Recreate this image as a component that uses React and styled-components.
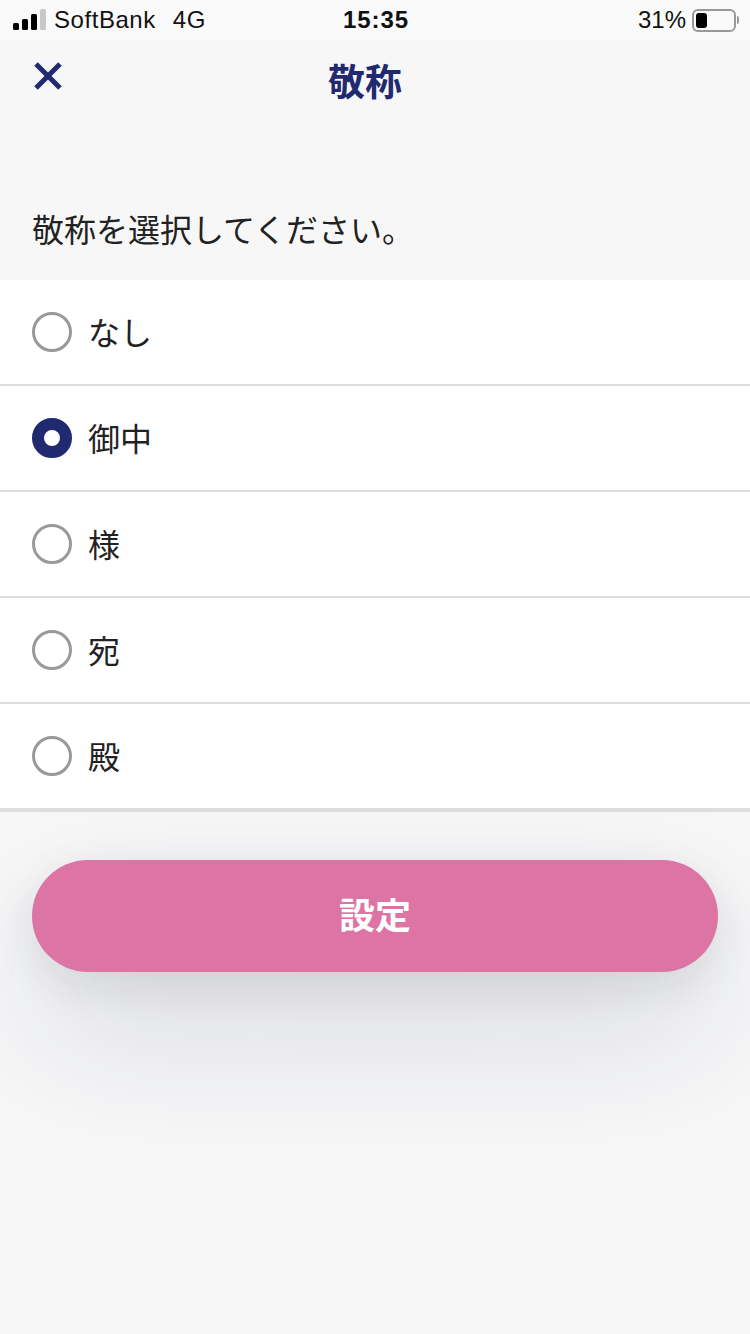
import React, { useState } from "react";
import styled, { createGlobalStyle } from "styled-components";

const options = ["なし", "御中", "様", "宛", "殿"];

const App = () => {
  const [selected] = useState("御中");

  return (
    <Page>
      <GlobalStyle />
      <StatusBar>
        <StatusLeft>
          <Signal>
            <SignalBar $h={7} />
            <SignalBar $h={11} />
            <SignalBar $h={16} />
            <SignalBar $h={21} $off />
          </Signal>
          <Carrier>SoftBank</Carrier>
          <Carrier>4G</Carrier>
        </StatusLeft>
        <Time>15:35</Time>
        <StatusRight>
          <span>31%</span>
          <Battery>
            <BatteryLevel />
          </Battery>
          <BatteryCap />
        </StatusRight>
      </StatusBar>

      <Header>
        <CloseButton aria-label="close">
          <svg width="30" height="30" viewBox="0 0 30 30">
            <path d="M3 3 L27 27 M27 3 L3 27" stroke="#212a6e" strokeWidth="5" fill="none" />
          </svg>
        </CloseButton>
        <Title>敬称</Title>
      </Header>

      <Prompt>敬称を選択してください。</Prompt>

      <List>
        {options.map((o) => (
          <Row key={o}>
            <Radio $on={o === selected} />
            <Label>{o}</Label>
          </Row>
        ))}
      </List>

      <Footer>
        <SubmitButton>
          <span>設定</span>
        </SubmitButton>
      </Footer>
    </Page>
  );
};

export default App;

const GlobalStyle = createGlobalStyle`
  html, body {
    margin: 0;
    padding: 0;
    background: #f7f7f8;
  }
  * {
    box-sizing: border-box;
  }
`;

const Page = styled.div`
  width: 750px;
  height: 1334px;
  overflow: hidden;
  background: #f7f7f8;
  color: #222;
  font-family: "Noto Sans CJK JP", "Liberation Sans", sans-serif;
`;

const StatusBar = styled.div`
  height: 40px;
  display: grid;
  grid-template-columns: 1fr auto 1fr;
  align-items: center;
  padding: 0 11px 0 13px;
  background: #fafafa;
  font-family: "Liberation Sans", sans-serif;
  font-size: 24px;
  color: #111;
`;

const StatusLeft = styled.div`
  display: flex;
  align-items: center;
`;

const Signal = styled.div`
  display: flex;
  align-items: flex-end;
  gap: 3px;
  height: 21px;
  margin: 0 8px 1px 0;
`;

const SignalBar = styled.div`
  width: 6px;
  height: ${(p) => p.$h}px;
  border-radius: 1.5px;
  background: ${(p) => (p.$off ? "#c8c8c8" : "#000")};
`;

const Carrier = styled.span`
  margin-right: 17px;
  letter-spacing: 0.55px;
`;

const Time = styled.div`
  font-weight: 700;
  letter-spacing: 0.9px;
`;

const StatusRight = styled.div`
  display: flex;
  align-items: center;
  justify-content: flex-end;
`;

const Battery = styled.div`
  width: 44px;
  height: 23px;
  margin-left: 6px;
  padding: 2px;
  border: 2px solid #999;
  border-radius: 6px;
`;

const BatteryLevel = styled.div`
  width: 11px;
  height: 100%;
  border-radius: 3px;
  background: #000;
`;

const BatteryCap = styled.div`
  width: 2px;
  height: 8px;
  margin-left: 1px;
  border-radius: 0 2px 2px 0;
  background: #9a9a9a;
`;

const Header = styled.div`
  height: 84px;
  display: flex;
  align-items: flex-start;
  padding: 0 83px 0 33px;
`;

const CloseButton = styled.div`
  width: 30px;
  height: 30px;
  margin-top: 21px;
  flex-shrink: 0;

  svg {
    display: block;
  }
`;

const Title = styled.h1`
  flex: 1;
  margin: 16px 0 0;
  text-align: center;
  font-size: 37px;
  line-height: 48px;
  font-weight: 700;
  color: #212a6e;
`;

const Prompt = styled.p`
  height: 156px;
  margin: 0;
  padding: 82px 0 0 32px;
  font-size: 32px;
  line-height: 44px;
  font-weight: 400;
`;

const List = styled.div`
  position: relative;
  z-index: 1;
  background: #fff;
  border-bottom: 2px solid #dcdddc;
`;

const Row = styled.div`
  height: 106px;
  display: flex;
  align-items: center;
  gap: 16px;
  padding: 0 32px;
  border-bottom: 2px solid #dcdddc;
`;

const Radio = styled.div`
  width: 40px;
  height: 40px;
  border-radius: 50%;
  flex-shrink: 0;
  border: ${(p) => (p.$on ? "12px solid #212a6e" : "3.5px solid #999")};
  background: #fff;
`;

const Label = styled.span`
  font-size: 32px;
  line-height: 44px;
  margin-top: -3px;
`;

const Footer = styled.div`
  padding: 48px 32px 0;
`;

const SubmitButton = styled.div`
  height: 112px;
  display: flex;
  align-items: center;
  justify-content: center;
  border-radius: 56px;
  background: #dc74a4;
  color: #fff;
  font-size: 36px;
  font-weight: 700;
  box-shadow: 0 14px 40px rgba(30, 35, 60, 0.1), 0 60px 140px rgba(30, 35, 60, 0.14);

  span {
    margin-top: -6px;
  }
`;
